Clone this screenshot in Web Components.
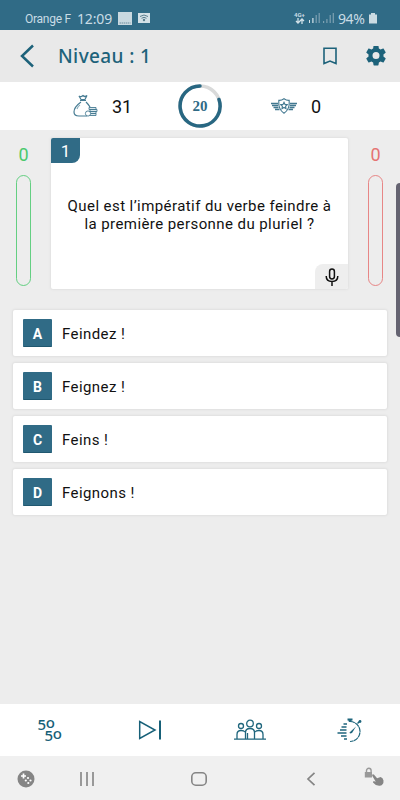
<!DOCTYPE html>
<html lang="fr">
<head>
<meta charset="utf-8">
<meta name="viewport" content="width=device-width, initial-scale=1">
<title>Niveau 1</title>
<style>
  body {
    margin: 0;
    height: 800px;
    overflow: hidden;
    background: #ededed;
    font-family: Roboto, "Liberation Sans", sans-serif;
    --main: #306b86;
    --dark: #1d627a;
  }
</style>
</head>
<body>
<quiz-app></quiz-app>

<script>
// attaches an open shadow root filled with the given markup
class BaseElement extends HTMLElement {
  constructor() {
    super();
    const template = document.createElement('template');
    template.innerHTML = this.render();
    this.attachShadow({ mode: 'open' }).appendChild(template.content.cloneNode(true));
  }
}

class StatusBar extends BaseElement {
  render() {
    return `
    <style>
      :host { display: flex; align-items: center; height: 30px; box-sizing: border-box; padding: 6px 22px 0 25px; background: var(--main); color: #c9dce5; }
      svg { display: block; flex: none; }
      .carrier { font-size: 12px; width: 52px; white-space: nowrap; letter-spacing: -.25px; padding-top: 1px; }
      .time { font: 14px "Noto Sans", sans-serif; width: 41px; letter-spacing: -.15px; }
      .net { margin-left: auto; width: 15px; font: bold 6px/6px Roboto, sans-serif; margin-top: -1px; }
      .pct { font: 14px "Noto Sans", sans-serif; width: 30px; margin-left: 3px; letter-spacing: -.4px; }
    </style>
    <span class="carrier">Orange F</span>
    <span class="time">12:09</span>
    <svg width="33" height="15" viewBox="0 0 33 15">
      <path d="M0 1h14v13H0z" fill="#c9d9e0"/>
      <path d="M1.500 12h11" stroke="#6c8d9c" stroke-dasharray="1.500 .6"/>
      <path d="M20 2h12v10H20z" fill="#d3e1e7"/>
      <g fill="none" stroke="#5a7e8e"><path d="M22 5.500q4-3 8 0M23.500 7.300q2.500-2 5 0"/></g>
      <circle cx="26" cy="9" r="1.200" fill="#5a7e8e"/>
    </svg>
    <div class="net">4G+
      <svg width="12" height="6" viewBox="0 0 12 6" fill="none" stroke="#d3e2e9" stroke-width="1.300"><path d="M4 0v5M2 3l2 2 2-2M8 6V1M6 3l2-2 2 2"/></svg>
    </div>
    <svg width="26" height="12" viewBox="0 0 26 12">
      <path d="M0 8h1v3H0zM3.300 6h1.200v5H3.300z" fill="#d7e5eb"/>
      <path d="M6.600 3h1.200v8H6.600zM9.600 1h1.200v10H9.600zM14 9h1.200v2H14zM17.300 7h1.200v4h-1.200zM20.600 3h1.200v8h-1.200zM23.700 1h1.200v10h-1.200z" fill="#7da1b2"/>
    </svg>
    <span class="pct">94%</span>
    <svg width="10" height="13" viewBox="0 0 10 13"><path d="M3 1h4v1.500h2v9H1v-9h2z" fill="#cbdbe2"/></svg>`;
  }
}

class LevelHeader extends BaseElement {
  render() {
    return `
    <style>
      :host { display: flex; align-items: center; height: 52px; box-sizing: border-box; padding: 0 14px 0 20px; background: #e9e9e9; color: var(--dark); }
      h1 { flex: 1; margin: 0 0 0 24px; font: 500 19px "Noto Sans", sans-serif; letter-spacing: .38px; padding-bottom: 1px; }
      svg { display: block; }
      .gear { margin-left: 28px; }
    </style>
    <svg width="14" height="24" viewBox="0 0 14 24" fill="none" stroke="var(--dark)" stroke-width="2.500"><path d="M13 1.500 2 12l11 10.500"/></svg>
    <h1><slot></slot></h1>
    <svg width="16" height="18" viewBox="0 0 16 18" fill="none" stroke="var(--dark)" stroke-width="1.600"><path d="M2 1.200h12v15.300L8 14 2 16.500z"/></svg>
    <svg class="gear" width="20" height="20" viewBox="2 2.500 20 20" fill="var(--dark)"><path d="M19.430 12.980c.04-.32.07-.64.07-.98s-.03-.66-.07-.98l2.110-1.650c.19-.15.24-.42.12-.64l-2-3.460c-.12-.22-.39-.3-.61-.22l-2.490 1c-.52-.4-1.080-.73-1.690-.98l-.38-2.650A.488.488 0 0 0 14 2h-4c-.25 0-.46.18-.49.42l-.38 2.650c-.61.25-1.170.59-1.690.98l-2.490-1c-.23-.09-.49 0-.61.22l-2 3.460c-.13.22-.07.49.12.64l2.110 1.650c-.04.32-.07.65-.07.98s.03.66.07.98l-2.110 1.650c-.19.15-.24.42-.12.64l2 3.460c.12.22.39.3.61.22l2.490-1c.52.4 1.080.73 1.690.98l.38 2.650c.03.24.24.42.49.42h4c.25 0 .46-.18.49-.42l.38-2.650c.61-.25 1.170-.59 1.690-.98l2.490 1c.23.09.49 0 .61-.22l2-3.460c.12-.22.07-.49-.12-.64zM12 15.500a3.500 3.500 0 1 1 0-7 3.500 3.500 0 0 1 0 7z"/></svg>`;
  }
}

class ScoreStrip extends BaseElement {
  render() {
    return `
    <style>
      :host { display: grid; grid-template-columns: 39px 65px 46px 48px 1fr; align-items: center; height: 48px; box-sizing: border-box; padding-left: 73px; background: #fff; color: #111; font-size: 18px; }
      svg { display: block; }
      .timer { display: grid; place-items: center; width: 46px; height: 46px; }
      .timer > * { grid-area: 1 / 1; }
      .timer span { font: bold 15px "Liberation Serif", serif; color: var(--main); }
      .shield { justify-self: end; margin-right: -26px; }
      .right { padding-left: 40px; }
    </style>
    <svg width="25" height="24" viewBox="0 0 25 24" fill="none" stroke="#477c93" stroke-width="1.200">
      <path d="M6 2q2 1.500 4-.5 2 2 4 0l-2 4H8zM7 6.500h6M8 8Q1 13 1 18q0 4 5 4h8M13 8q3 3 4 5"/>
      <path d="M4 15q1-3 3-4" stroke="#8bafbe"/>
      <g fill="#dbe8ed" stroke-width=".9"><path d="M16 13.500h7v2h-7zM17 15.500h7v2h-7zM16 17.500h7v2h-7zM16 19.500h7v2h-7z"/><circle cx="15" cy="19.500" r="2.600" fill="#fff"/></g>
    </svg>
    <span><slot name="coins"></slot></span>
    <div class="timer">
      <svg width="46" height="46" viewBox="0 0 46 46" fill="none" stroke-width="3.500">
        <circle cx="23" cy="23" r="20" stroke="#d9dada"/>
        <path d="M42 16.500A20 20 0 1 1 23 3" stroke="#286782" stroke-linecap="round"/>
      </svg>
      <span><slot name="timer"></slot></span>
    </div>
    <svg class="shield" width="26" height="16" viewBox="0 0 26 16" fill="none" stroke="#427890" stroke-width="1.100">
      <path d="M13 .8q2.500 1.800 5.200 1.600.8 9-5.200 12.800Q7 11.400 7.800 2.400 10.500 2.600 13 .8z"/>
      <path d="m13 4.300 1 2.100 2.300.3-1.700 1.600.4 2.300-2-1.100-2 1.100.4-2.300-1.700-1.600 2.300-.3z"/>
      <path d="M0 5.500h7M1 7.500h6M2.500 9.500h5M4 11.500h4.500M26 5.500h-7M25 7.500h-6M23.500 9.500h-5M22 11.500h-4.500" stroke-width="1.300"/>
    </svg>
    <span class="right"><slot name="badges"></slot></span>`;
  }
}

// counter with an empty vertical gauge under it
class ScoreGauge extends BaseElement {
  render() {
    return `
    <style>
      :host { display: flex; flex-direction: column; align-items: center; width: 21px; font-size: 18px; line-height: 20px; padding-top: 7px; }
      .tube { width: 15px; height: 111px; box-sizing: border-box; border: 1px solid; border-radius: 8px; margin-top: 10px; opacity: .85; }
    </style>
    <slot></slot>
    <div class="tube"></div>`;
  }
}

class QuestionCard extends BaseElement {
  render() {
    return `
    <style>
      :host { display: grid; grid-template-rows: 25px 1fr 25px; width: 297px; height: 151px; background: #fff; border-radius: 2px; box-shadow: 0 0 2px 1px #e2e2e2; color: #111; }
      .num { width: 29px; height: 25px; background: var(--main); color: #fff; border-radius: 2px 0 8px 0; font-size: 17px; line-height: 26px; text-align: center; }
      p { margin: 0; align-self: center; justify-self: center; text-align: center; font-size: 15px; line-height: 18px; letter-spacing: .42px; white-space: nowrap; padding-top: 3px; }
      .mic { justify-self: end; display: grid; place-items: center; width: 33px; height: 25px; background: #eee; border-radius: 8px 0 2px 0; }
    </style>
    <div class="num"><slot name="number"></slot></div>
    <p><slot></slot></p>
    <div class="mic">
      <svg width="14" height="18" viewBox="0 0 14 18" fill="none" stroke="#111" stroke-width="1.500"><rect x="4.600" y="1" width="4.800" height="10" rx="2.400"/><path d="M1.200 8q0 5.500 5.800 5.500T12.800 8M7 13.500V18"/></svg>
    </div>`;
  }
}

class AnswerOption extends BaseElement {
  render() {
    return `
    <style>
      :host { display: flex; align-items: center; height: 46px; box-sizing: border-box; padding-left: 10px; background: #fff; border-radius: 2px; box-shadow: 0 0 2px 1px #e0e0e0; font-size: 15px; letter-spacing: .42px; color: #111; }
      .letter { width: 29px; height: 28px; margin-right: 10px; background: var(--main); border-bottom: 1px solid #205870; box-sizing: border-box; border-radius: 1px; color: #fff; font-weight: bold; font-size: 14px; line-height: 30px; text-align: center; letter-spacing: 0; }
      .text { padding-top: 2px; }
    </style>
    <div class="letter"><slot name="letter"></slot></div>
    <span class="text"><slot></slot></span>`;
  }
}

class JokerBar extends BaseElement {
  render() {
    return `
    <style>
      :host { display: grid; grid-template-columns: repeat(4, 1fr); place-items: center; height: 52px; background: #fff; color: #176078; }
      svg { display: block; }
      .fifty { display: grid; grid-auto-rows: 11px; width: 25px; font: 500 15px/11px "Noto Sans", sans-serif; letter-spacing: -.3px; white-space: nowrap; }
      .fifty span + span { padding-left: 7px; }
      .fifty b { font-weight: inherit; display: inline-block; transform: translateY(-2px); }
    </style>
    <div class="fifty"><span>5<b>o</b></span><span>5<b>o</b></span></div>
    <svg width="24" height="20" viewBox="0 0 24 20" fill="none" stroke="#176078" stroke-width="1.500"><path d="M1.700 1.500v17L17 10z"/><path d="M22 .5v19" stroke-width="2"/></svg>
    <svg width="32" height="22" viewBox="0 0 32 22" fill="none" stroke="#1f667d" stroke-width="1.300">
      <circle cx="16" cy="4.500" r="3.300"/><circle cx="7" cy="7" r="2.500"/><circle cx="25" cy="7" r="2.500"/>
      <path d="M11.500 20v-6.500q0-4 4.500-4t4.500 4V20M3 20v-4.500q0-4 4-4 3 0 4 1.500M29 20v-4.500q0-4-4-4-3 0-4 1.500M0 20.200h32M13.500 14v6"/>
    </svg>
    <svg width="26" height="26" viewBox="0 0 26 26" fill="none" stroke="#1f667d" stroke-width="1.200">
      <path d="M13 4.500A10 10 0 1 1 13 24.500" stroke-dasharray="5 .5"/>
      <path d="M10.500 2.500h5M11.500 3.500h3M13 2v3" stroke-width="1.800"/>
      <path d="m20.500 6.500 2-2" stroke-width="1.500"/><circle cx="23" cy="4.500" r="1.400" fill="#1f667d" stroke="none"/>
      <path d="m12.500 15.500 6.500-6-4 6.500-2 .5z" fill="#1f667d" stroke="none"/>
      <path d="M6.500 7h3.500M4.500 10h5M3 13h6.500M.5 16h9M4 19h5.500M7 22h3" stroke-width="1.600"/>
    </svg>`;
  }
}

class SystemNav extends BaseElement {
  render() {
    return `
    <style>
      :host { display: grid; grid-template-columns: 62px 112px 115px 58px 20px; align-items: center; height: 44px; box-sizing: border-box; padding: 2px 0 0 17px; background: #f0f0f0; }
      svg { display: block; }
      svg:first-child, svg:last-child { margin-top: -4px; }
    </style>
    <svg width="18" height="18" viewBox="0 0 18 18"><circle cx="9" cy="9" r="8.500" fill="#858585"/><path d="M6.500 3.500v5M4 6h5" stroke="#fff" stroke-width="1.700"/><g fill="#fff"><circle cx="11" cy="8" r="1.100"/><circle cx="13.500" cy="10.500" r="1.100"/><circle cx="8.800" cy="10.500" r="1.100"/><circle cx="11.300" cy="13" r="1.100"/></g></svg>
    <svg width="16" height="14" viewBox="0 0 16 14" stroke="#8a8a8a" stroke-width="1.700"><path d="M2 0v14M8 0v14M14 0v14"/></svg>
    <svg width="16" height="14" viewBox="0 0 16 14" fill="none" stroke="#858585" stroke-width="1.600"><rect x=".8" y=".8" width="14.400" height="12.400" rx="4"/></svg>
    <svg width="10" height="14" viewBox="0 0 10 14" fill="none" stroke="#858585" stroke-width="1.700"><path d="M8.500.8 2 7l6.500 6.200"/></svg>
    <svg width="20" height="20" viewBox="0 0 20 20"><path d="M2.500 5V3.500a2.300 2.300 0 0 1 4.600 0V5" fill="none" stroke="#999" stroke-width="1.400"/><path d="M.8 5H8v5.500H.8z" fill="#999"/><path d="M8.300 7.500q1-.8 1.800.3l3 3.500 3.500-1.300q2.400.8 2.900 3.500.3 4.500-3.500 5.300-4 .5-7-3.300-.5-1.500 1.300-1.300l1.500.6-3.600-6z" fill="#858585"/></svg>`;
  }
}

class QuizApp extends BaseElement {
  render() {
    return `
    <style>
      :host { display: flex; flex-direction: column; width: 400px; height: 800px; position: relative; }
      .question { display: flex; justify-content: space-between; padding: 8px 14px 0 13px; }
      .good { color: #4bc96e; }
      .bad { color: #e57373; }
      .answers { display: flex; flex-direction: column; gap: 7px; padding: 21px 13px 0; flex: 1; }
      /* system edge panel handle, floats above the page */
      .handle { position: absolute; right: 0; top: 183px; width: 4px; height: 154px; background: #656371; border-radius: 4px 0 0 4px; }
    </style>
    <status-bar></status-bar>
    <level-header>Niveau : 1</level-header>
    <score-strip>
      <span slot="coins">31</span>
      <span slot="timer">20</span>
      <span slot="badges">0</span>
    </score-strip>
    <div class="question">
      <score-gauge class="good">0</score-gauge>
      <question-card>
        <span slot="number">1</span>
        Quel est l’impératif du verbe feindre à<br>la première personne du pluriel ?
      </question-card>
      <score-gauge class="bad">0</score-gauge>
    </div>
    <div class="answers">
      <answer-option><span slot="letter">A</span>Feindez !</answer-option>
      <answer-option><span slot="letter">B</span>Feignez !</answer-option>
      <answer-option><span slot="letter">C</span>Feins !</answer-option>
      <answer-option><span slot="letter">D</span>Feignons !</answer-option>
    </div>
    <joker-bar></joker-bar>
    <system-nav></system-nav>
    <div class="handle"></div>`;
  }
}

customElements.define('status-bar', StatusBar);
customElements.define('level-header', LevelHeader);
customElements.define('score-strip', ScoreStrip);
customElements.define('score-gauge', ScoreGauge);
customElements.define('question-card', QuestionCard);
customElements.define('answer-option', AnswerOption);
customElements.define('joker-bar', JokerBar);
customElements.define('system-nav', SystemNav);
customElements.define('quiz-app', QuizApp);
</script>
</body>
</html>
